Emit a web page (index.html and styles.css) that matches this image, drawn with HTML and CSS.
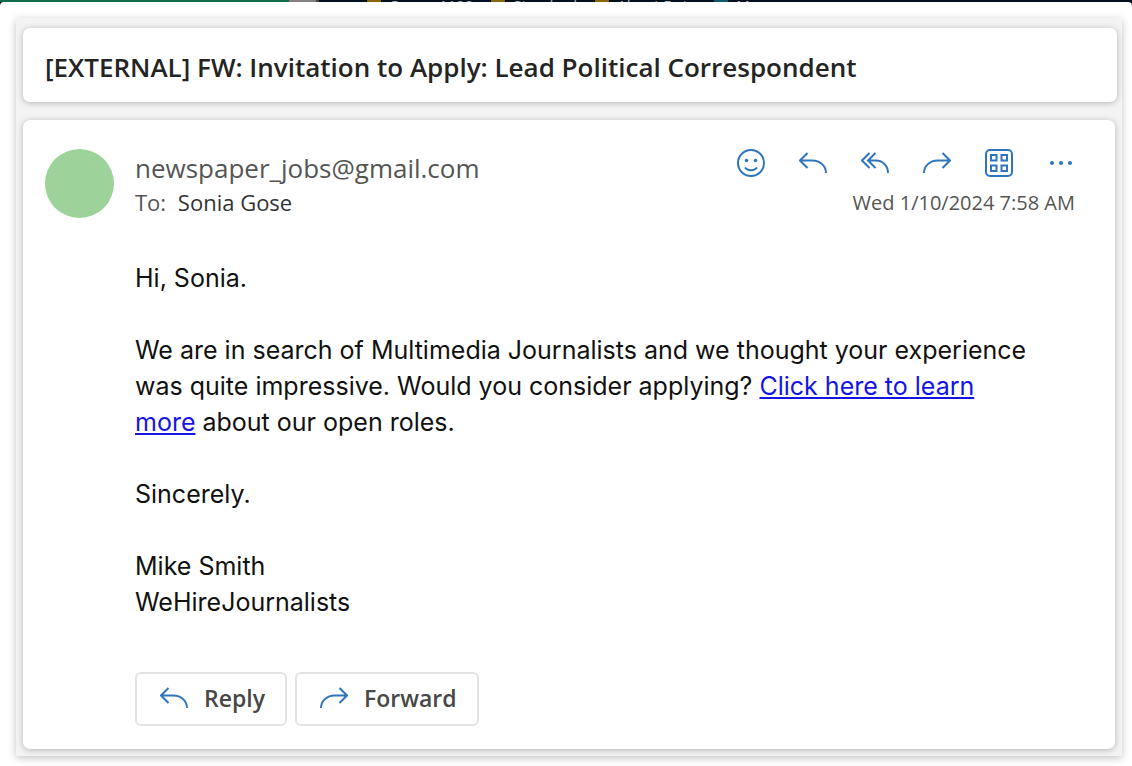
FILE: index.html
```html
<!DOCTYPE html>
<html lang="en">
<head>
<meta charset="utf-8">
<title>Invitation to Apply</title>
<link rel="stylesheet" href="styles.css">
</head>
<body>
<svg width="0" height="0" class="defs" aria-hidden="true">
  <symbol id="reply" viewBox="0 0 28 22"><path d="M8.500 1 1 8.500l7.500 7.500M1 8.500h12.500C21 8.500 27 14 27 21"/></symbol>
  <symbol id="forward" viewBox="0 0 28 22"><path d="M19.500 1l7.500 7.500-7.500 7.500M27 8.500H14.500C7 8.500 1 14 1 21"/></symbol>
</svg>
<div class="strip" aria-hidden="true">
  <span class="strip-green"></span><span class="strip-grey"></span><span class="strip-edge"></span>
  <div class="bookmarks"><span>Canvas1100</span><span>Standard</span><span>About Data</span><span class="teal">Ma</span></div>
</div>
<div class="window">
  <main class="mail">
    <header class="card subject"><h1>[EXTERNAL] FW: Invitation to Apply: Lead Political Correspondent</h1></header>
    <article class="card message">
      <div class="avatar"></div>
      <div class="content">
        <div class="head">
          <div class="people">
            <div class="sender">newspaper_jobs@gmail.com</div>
            <div class="to">To: <span class="recipient">Sonia Gose</span></div>
          </div>
          <div class="side">
            <div class="actions">
              <button type="button" aria-label="React"><svg width="28" height="28" viewBox="0 0 28 28"><circle cx="14" cy="14" r="13"/><path d="M8 18.500c3 3.800 9 3.800 12 0"/><circle class="dot" cx="9.500" cy="11.500" r="1.800"/><circle class="dot" cx="18.500" cy="11.500" r="1.800"/></svg></button>
              <button type="button" aria-label="Reply"><svg width="28" height="22"><use href="#reply"/></svg></button>
              <button type="button" aria-label="Reply all"><svg width="28" height="22" viewBox="0 0 28 22"><path d="M8.500 1 1 8.500l7.500 7.500M14.500 1 7 8.500l7.500 7.500M7 8.500h8C22 8.500 27 14 27 21"/></svg></button>
              <button type="button" aria-label="Forward"><svg width="28" height="22"><use href="#forward"/></svg></button>
              <button type="button" aria-label="Apps"><svg width="28" height="28" viewBox="0 0 28 28"><rect x="1" y="1" width="26" height="26" rx="4"/><path d="M6 6h5.500v5.500H6zM16.500 6H22v5.500h-5.500zM6 16.500h5.500V22H6zM16.500 16.500H22V22h-5.500z"/></svg></button>
              <button type="button" aria-label="More actions"><svg width="28" height="28" viewBox="0 0 28 28"><circle class="dot" cx="5" cy="14" r="2"/><circle class="dot" cx="14" cy="14" r="2"/><circle class="dot" cx="23" cy="14" r="2"/></svg></button>
            </div>
            <time datetime="2024-01-10T07:58">Wed 1/10/2024 7:58 AM</time>
          </div>
        </div>
        <div class="body">
          <p>Hi, Sonia.</p>
          <p>We are in search of Multimedia Journalists and we thought your experience was quite impressive. Would you consider applying? <a href="#">Click here to learn more</a> about our open roles.</p>
          <p>Sincerely.</p>
          <p>Mike Smith<br>WeHireJournalists</p>
        </div>
        <div class="buttons">
          <button type="button" class="action"><svg width="28" height="22"><use href="#reply"/></svg>Reply</button>
          <button type="button" class="action"><svg width="28" height="22"><use href="#forward"/></svg>Forward</button>
        </div>
      </div>
    </article>
  </main>
</div>
</body>
</html>
```

FILE: styles.css
```css
* { box-sizing: border-box; }
body { margin: 0; min-height: 100vh; display: flex; flex-direction: column; background: #00101f; font-family: "Open Sans", "Noto Sans", sans-serif; color: #242424; }
.defs { position: absolute; }
.strip { height: 2px; display: flex; overflow: hidden; background: #00101f; }
.strip-green { width: 289px; background: #106b48; }
.strip-grey { width: 27px; background: #858080; }
.strip-edge { width: 3px; background: #444; }
.bookmarks { display: flex; gap: 18px; margin-left: 48px; font-size: 15px; line-height: 2px; color: #b0b4b8; white-space: nowrap; }
.bookmarks span { display: flex; gap: 8px; padding-top: 4px; }
.bookmarks span::before { content: ""; width: 14px; height: 2px; margin-top: -4px; background: #8b6508; }
.bookmarks .teal::before { background: #0b5c65; }
.window { flex: 1; background: #fff; border-radius: 4px 4px 0 0; padding: 16px 10px 10px 16px; display: flex; flex-direction: column; }
.mail { flex: 1; background: #f3f3f3; box-shadow: 0 2px 8px rgba(0,0,0,.24); padding: 10px 5px 7px 7px; display: flex; flex-direction: column; gap: 18px; }
.card { background: #fff; border-radius: 7px; box-shadow: 0 1px 6px rgba(0,0,0,.26); }
.subject { padding: 24px 22px 20px; }
h1 { margin: 0; font-size: 26px; line-height: 30px; font-weight: 600; }
.message { flex: 1; margin-right: 2px; padding: 29px 40px 23px 22px; display: flex; gap: 21px; }
.avatar { width: 69px; height: 69px; border-radius: 50%; background: #9dd29a; flex: none; }
.content { flex: 1; min-width: 0; display: flex; flex-direction: column; }
.head { display: flex; justify-content: space-between; }
.sender { font-size: 26px; line-height: 38px; color: #555; }
.to { font-size: 22px; line-height: 30px; color: #555; }
.recipient { margin-left: 6px; color: #333; }
.side { display: flex; flex-direction: column; align-items: flex-end; }
.actions { display: flex; gap: 34px; height: 28px; align-items: center; }
button { font: inherit; padding: 0; border: 0; background: none; display: flex; align-items: center; }
svg { fill: none; stroke: #2f75bd; stroke-width: 2; display: block; }
.dot { fill: #2f75bd; stroke: none; }
time { margin-top: 12px; font-size: 20px; line-height: 28px; color: #555; }
.body { margin-top: 43px; padding-right: 40px; font-family: Inter, sans-serif; font-size: 25px; line-height: 36px; color: #111; }
p { margin: 0 0 36px; }
a { color: #1414e6; }
.buttons { margin-top: auto; display: flex; gap: 8px; }
.action { height: 54px; padding: 0 20px 2px 23px; gap: 16px; border: 2px solid #e3e3e3; border-radius: 6px; font-size: 23px; font-weight: 600; color: #484848; }
```
